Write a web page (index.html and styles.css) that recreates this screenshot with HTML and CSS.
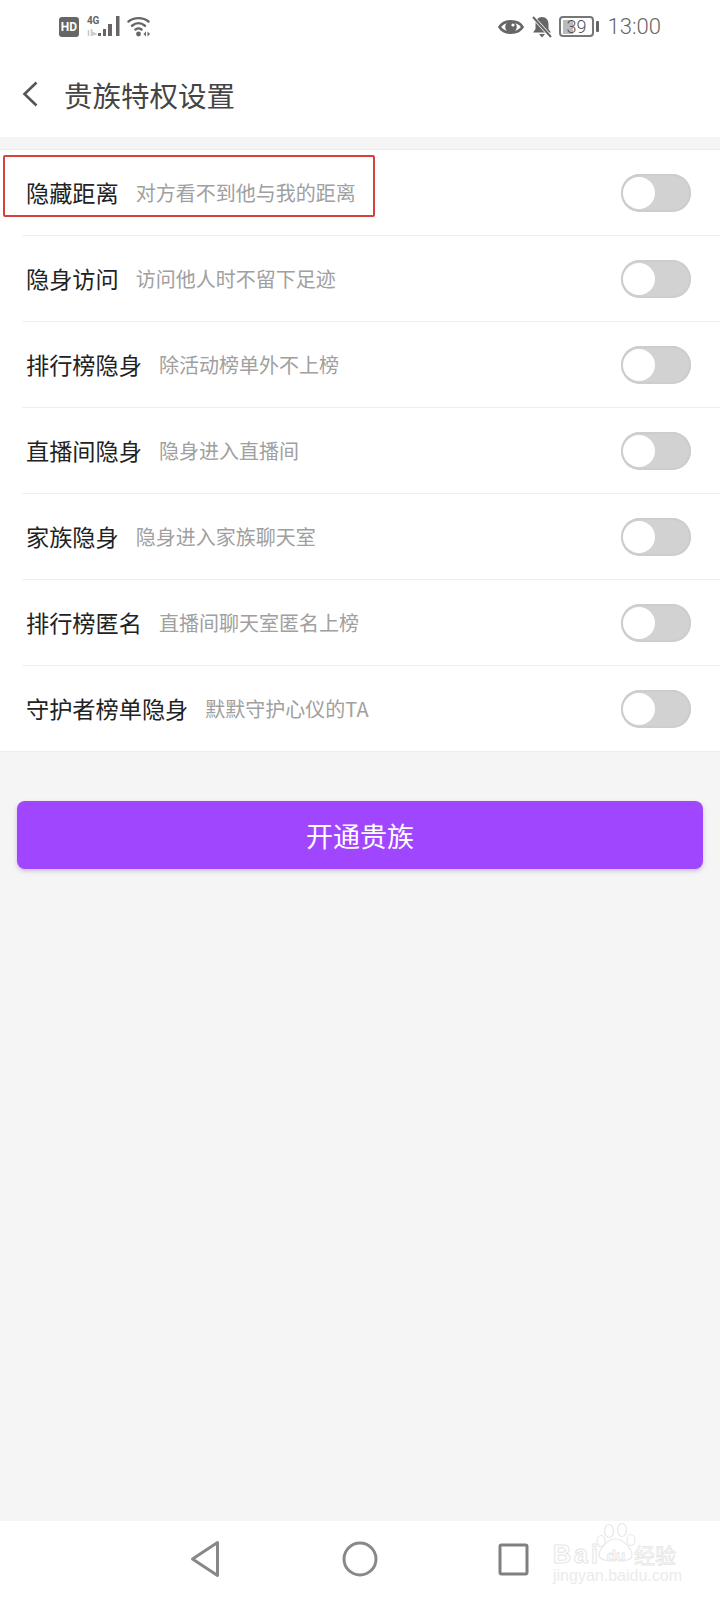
FILE: index.html
```html
<!DOCTYPE html>
<html lang="zh-CN">
<head>
<meta charset="utf-8">
<title>贵族特权设置</title>
<link rel="stylesheet" href="styles.css">
</head>
<body>
<div class="page">
  <div class="status">
    <div class="status-left">
      <span class="hd">HD</span>
      <div class="net">
        <span class="net-label">4G</span>
        <svg class="net-sub" width="11" height="7" viewBox="0 0 11 7"><path d="M1.500 7V1M4.500 7V0M4.500 3l4 2-4 1" stroke="#c8c8c8" stroke-width="1.500" fill="none"/></svg>
      </div>
      <svg class="bars" width="23" height="21" viewBox="0 0 23 21"><rect x="1" y="17" width="3" height="3" fill="#666"/><rect x="6" y="13" width="3" height="7" fill="#666"/><rect x="11" y="8" width="4" height="12" fill="#666"/><rect x="19" y="0" width="3.500" height="20" fill="#666"/></svg>
      <svg class="wifi" width="25" height="21" viewBox="0 0 25 21"><path d="M1.500 5.500C7 1 16 1 21.500 5.500M5 9.800c4-3.300 9-3.300 13 0M8.500 13.500c2-1.500 4-1.500 6 0" fill="none" stroke="#666" stroke-width="2.400" stroke-linecap="round"/><circle cx="11.500" cy="18" r="2.400" fill="#666"/><path d="M19 15.500v5l-2.500-2.500zM20.500 15.500v5l2.500-2.500z" fill="#666"/></svg>
    </div>
    <div class="status-right">
      <svg width="26" height="18" viewBox="0 0 26 18"><path d="M1.500 9C6 1.500 20 1.500 24.500 9 20 16.500 6 16.500 1.500 9z" fill="none" stroke="#666" stroke-width="2.600"/><circle cx="13" cy="9" r="5.800" fill="#666"/><circle cx="15" cy="7" r="1.600" fill="#fff"/></svg>
      <svg class="bell" width="20" height="22" viewBox="0 0 20 22"><path d="M10 1C6 1 3.500 4 3.500 8v5L1 16.500h18L16.500 13V8C16.500 4 14 1 10 1z" fill="#666"/><path d="M7 18h6l-3 3.500z" fill="#666"/><path d="M1 1l18 20" stroke="#fff" stroke-width="3.500"/><path d="M1 1l18 20" stroke="#666" stroke-width="2"/></svg>
      <div class="battery"><span class="battery-fill"></span><span class="battery-num">39</span></div>
      <span class="battery-nub"></span>
      <span class="time">13:00</span>
    </div>
  </div>

  <header class="header">
    <svg class="back" width="16" height="26" viewBox="0 0 16 26"><path d="M14.500 1.500 2.500 13 14.500 24.500" fill="none" stroke="#555" stroke-width="2.600"/></svg>
    <h1 class="title">贵族特权设置</h1>
  </header>

  <div class="band"></div>

  <section class="list">
    <div class="highlight"></div>
    <div class="row"><span class="label">隐藏距离</span><span class="sub">对方看不到他与我的距离</span><span class="toggle"><span class="knob"></span></span></div>
    <div class="row"><span class="label">隐身访问</span><span class="sub">访问他人时不留下足迹</span><span class="toggle"><span class="knob"></span></span></div>
    <div class="row"><span class="label">排行榜隐身</span><span class="sub">除活动榜单外不上榜</span><span class="toggle"><span class="knob"></span></span></div>
    <div class="row"><span class="label">直播间隐身</span><span class="sub">隐身进入直播间</span><span class="toggle"><span class="knob"></span></span></div>
    <div class="row"><span class="label">家族隐身</span><span class="sub">隐身进入家族聊天室</span><span class="toggle"><span class="knob"></span></span></div>
    <div class="row"><span class="label">排行榜匿名</span><span class="sub">直播间聊天室匿名上榜</span><span class="toggle"><span class="knob"></span></span></div>
    <div class="row"><span class="label">守护者榜单隐身</span><span class="sub">默默守护心仪的TA</span><span class="toggle"><span class="knob"></span></span></div>
  </section>

  <div class="action"><button class="primary">开通贵族</button></div>

  <nav class="navbar">
    <svg width="30" height="38" viewBox="0 0 30 38"><path d="M27.500 2.500 2.500 19l25 16.500z" fill="none" stroke="#888" stroke-width="3" stroke-linejoin="round"/></svg>
    <svg class="nav-circle" width="36" height="36" viewBox="0 0 36 36"><circle cx="18" cy="18" r="16" fill="none" stroke="#888" stroke-width="3"/></svg>
    <svg class="nav-square" width="31" height="33" viewBox="0 0 31 33"><rect x="2" y="2" width="27" height="29" rx="1.500" fill="none" stroke="#808080" stroke-width="3"/></svg>
    <div class="mark">
      <svg class="paw" width="40" height="38" viewBox="0 0 40 38"><g fill="none" stroke="#e8e8e8" stroke-width="1.200"><ellipse cx="13" cy="8" rx="4.500" ry="6.500"/><ellipse cx="26" cy="7" rx="4.500" ry="6.500"/><ellipse cx="5" cy="18" rx="4" ry="5.500"/><ellipse cx="35" cy="17" rx="4" ry="5.500"/><path d="M3 32c0-5 8-16 16.500-16S36 27 36 32c0 4-4 5.500-8 5s-11-1-15 0-10-1-10-5z"/></g></svg>
      <div class="mark-top"><span class="mark-bai">Bai</span><span class="mark-du">du</span><span class="mark-cn">经验</span></div>
      <div class="mark-url">jingyan.baidu.com</div>
    </div>
  </nav>
</div>
</body>
</html>
```
FILE: styles.css
```css
* { box-sizing: border-box; }
html, body { margin: 0; padding: 0; }
body { font-family: "Noto Sans CJK SC", "Noto Sans", sans-serif; background: #f5f5f5; }
.page { width: 720px; height: 1600px; display: flex; flex-direction: column; background: #f5f5f5; overflow: hidden; }

.status { height: 50px; background: #fff; display: flex; justify-content: space-between; align-items: center; padding: 3px 59px 0 59px; color: #666; }
.status-left { display: flex; align-items: center; }
.hd { width: 20px; height: 20px; border-radius: 3px; background: #666; color: #fff; font: 700 12px/20px "Roboto", sans-serif; text-align: center; }
.net { width: 10px; margin-left: 8px; display: flex; flex-direction: column; align-items: flex-start; height: 21px; }
.net-label { font: 700 10px/10px "Roboto", sans-serif; color: #666; letter-spacing: -.3px; white-space: nowrap; }
.net-sub { display: block; margin-top: 3px; }
.wifi { margin-left: 7px; }
.status-right { display: flex; align-items: center; }
.bell { margin-left: 8px; }
.battery { position: relative; margin-left: 7px; width: 35px; height: 21px; border: 2px solid #777; border-radius: 4px; display: flex; align-items: center; overflow: hidden; }
.battery-fill { width: 10px; height: 14px; margin-left: 2px; background: #bbb; }
.battery-num { position: absolute; left: 6px; top: 0; font: 300 18px/17px "Roboto", sans-serif; color: #555; }
.battery-nub { width: 3px; height: 11px; margin-left: 2px; background: #666; border-radius: 1px; }
.time { margin-left: 9px; font: 300 22px/26px "Roboto", sans-serif; color: #666; }

.header { height: 87px; background: #fff; display: flex; align-items: center; padding: 0 0 0 22px; }
.back { flex: none; margin-top: 1px; }
.title { margin: 2px 0 0 26px; font-size: 28.5px; font-weight: 400; color: #444; line-height: 40px; }

.band { height: 13px; background: #f5f5f5; border-bottom: 1px solid #ececec; }

.list { position: relative; background: #fff; border-bottom: 1px solid #ececec; }
.row { height: 86px; margin-left: 22px; padding: 0 29px 0 4px; display: flex; align-items: center; border-bottom: 1px solid #efefef; }
.row:last-child { height: 85px; border-bottom: 0; }
.label { font-size: 23.2px; color: #222; line-height: 32px; padding-bottom: 2px; }
.sub { margin-left: 17px; font-size: 20px; color: #a0a0a0; line-height: 28px; padding-top: 1px; }
.toggle { margin-left: auto; width: 70px; height: 38px; border-radius: 19px; background: #d2d2d2; padding: 3px 2px; box-shadow: inset 0 0 0 2px #cdcdcd; }
.knob { display: block; width: 32px; height: 32px; border-radius: 50%; background: #fff; }
.highlight { position: absolute; left: 3px; top: 5px; width: 372px; height: 62px; border: 2px solid #d8403c; border-radius: 2px; pointer-events: none; }

.action { flex: 1; padding: 49px 17px 0; }
.primary { display: block; width: 686px; height: 68px; border: 0; border-radius: 8px; background: #a146ff; color: #fff; font: 400 27px/68px "Noto Sans CJK SC", sans-serif; box-shadow: 0 2px 4px rgba(110, 60, 170, .3); padding: 1px 0 0; }

.navbar { position: relative; height: 79px; background: #fff; display: flex; align-items: center; padding: 0 0 3px 190px; }
.nav-circle { margin-left: 122px; }
.nav-square { margin-left: 120px; }
.mark { position: absolute; left: 553px; top: 0; width: 130px; height: 78px; }
.paw { position: absolute; left: 43px; top: 2px; }
.mark-top { position: absolute; left: 0; top: 16px; display: flex; align-items: center; white-space: nowrap; color: #fff; }
.mark-bai { font: 700 25px/28px "Liberation Sans", sans-serif; width: 46px; letter-spacing: 3px; -webkit-text-stroke: 1px #e6e6e6; }
.mark-du { width: 34px; font: 700 15px/28px "Liberation Sans", sans-serif; text-align: center; padding-top: 5px; -webkit-text-stroke: .8px #e6e6e6; }
.mark-cn { font-size: 21px; line-height: 28px; margin-left: 1px; -webkit-text-stroke: .8px #e6e6e6; }
.mark-url { position: absolute; left: 0; top: 46px; font: 400 16px/18px "Liberation Sans", sans-serif; white-space: nowrap; color: #ebebeb; }
```
